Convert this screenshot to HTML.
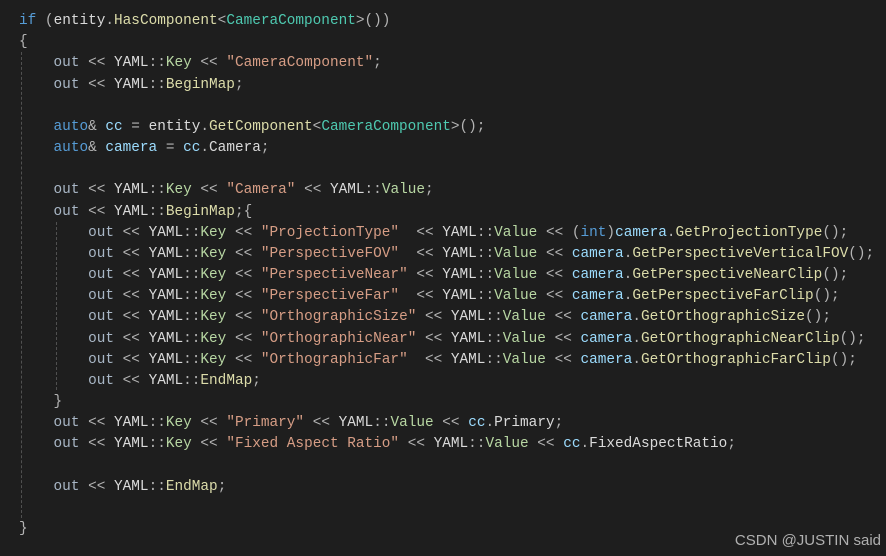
<!DOCTYPE html>
<html><head><meta charset="utf-8"><style>
html,body{margin:0;padding:0;background:#1e1e1e;width:886px;height:556px;overflow:hidden;position:relative}
pre{margin:0;position:absolute;left:19px;top:11px;font-family:"Liberation Mono",monospace;font-size:14.4px;line-height:21.17px;color:#dadada;white-space:pre}
.k{color:#569cd6}.t{color:#4ec9b0}.f{color:#dcdcaa}.s{color:#d69d85}.o{color:#b4b4b4}.v{color:#9cdcfe}.e{color:#b8d7a3}.l{color:#a9b7c6}
.g{position:absolute;width:0;border-left:1px dashed #505050}
.wm{position:absolute;right:5px;top:532px;font-family:"Liberation Sans",sans-serif;font-size:15px;color:#b0b0b0}
</style></head><body>
<div class="g" style="left:21px;top:52px;height:466px"></div>
<div class="g" style="left:56px;top:222px;height:168px"></div>
<pre><span class="k">if</span> <span class="o">(</span>entity<span class="o">.</span><span class="f">HasComponent</span><span class="o">&lt;</span><span class="t">CameraComponent</span><span class="o">&gt;())</span>
<span class="o">{</span>
    <span class="l">out</span> <span class="o">&lt;&lt;</span> YAML<span class="o">::</span><span class="e">Key</span> <span class="o">&lt;&lt;</span> <span class="s">"CameraComponent"</span><span class="o">;</span>
    <span class="l">out</span> <span class="o">&lt;&lt;</span> YAML<span class="o">::</span><span class="f">BeginMap</span><span class="o">;</span>

    <span class="k">auto</span><span class="o">&amp;</span> <span class="v">cc</span> <span class="o">=</span> entity<span class="o">.</span><span class="f">GetComponent</span><span class="o">&lt;</span><span class="t">CameraComponent</span><span class="o">&gt;();</span>
    <span class="k">auto</span><span class="o">&amp;</span> <span class="v">camera</span> <span class="o">=</span> <span class="v">cc</span><span class="o">.</span>Camera<span class="o">;</span>

    <span class="l">out</span> <span class="o">&lt;&lt;</span> YAML<span class="o">::</span><span class="e">Key</span> <span class="o">&lt;&lt;</span> <span class="s">"Camera"</span> <span class="o">&lt;&lt;</span> YAML<span class="o">::</span><span class="e">Value</span><span class="o">;</span>
    <span class="l">out</span> <span class="o">&lt;&lt;</span> YAML<span class="o">::</span><span class="f">BeginMap</span><span class="o">;{</span>
        <span class="l">out</span> <span class="o">&lt;&lt;</span> YAML<span class="o">::</span><span class="e">Key</span> <span class="o">&lt;&lt;</span> <span class="s">"ProjectionType"</span>  <span class="o">&lt;&lt;</span> YAML<span class="o">::</span><span class="e">Value</span> <span class="o">&lt;&lt;</span> <span class="o">(</span><span class="k">int</span><span class="o">)</span><span class="v">camera</span><span class="o">.</span><span class="f">GetProjectionType</span><span class="o">();</span>
        <span class="l">out</span> <span class="o">&lt;&lt;</span> YAML<span class="o">::</span><span class="e">Key</span> <span class="o">&lt;&lt;</span> <span class="s">"PerspectiveFOV"</span>  <span class="o">&lt;&lt;</span> YAML<span class="o">::</span><span class="e">Value</span> <span class="o">&lt;&lt;</span> <span class="v">camera</span><span class="o">.</span><span class="f">GetPerspectiveVerticalFOV</span><span class="o">();</span>
        <span class="l">out</span> <span class="o">&lt;&lt;</span> YAML<span class="o">::</span><span class="e">Key</span> <span class="o">&lt;&lt;</span> <span class="s">"PerspectiveNear"</span> <span class="o">&lt;&lt;</span> YAML<span class="o">::</span><span class="e">Value</span> <span class="o">&lt;&lt;</span> <span class="v">camera</span><span class="o">.</span><span class="f">GetPerspectiveNearClip</span><span class="o">();</span>
        <span class="l">out</span> <span class="o">&lt;&lt;</span> YAML<span class="o">::</span><span class="e">Key</span> <span class="o">&lt;&lt;</span> <span class="s">"PerspectiveFar"</span>  <span class="o">&lt;&lt;</span> YAML<span class="o">::</span><span class="e">Value</span> <span class="o">&lt;&lt;</span> <span class="v">camera</span><span class="o">.</span><span class="f">GetPerspectiveFarClip</span><span class="o">();</span>
        <span class="l">out</span> <span class="o">&lt;&lt;</span> YAML<span class="o">::</span><span class="e">Key</span> <span class="o">&lt;&lt;</span> <span class="s">"OrthographicSize"</span> <span class="o">&lt;&lt;</span> YAML<span class="o">::</span><span class="e">Value</span> <span class="o">&lt;&lt;</span> <span class="v">camera</span><span class="o">.</span><span class="f">GetOrthographicSize</span><span class="o">();</span>
        <span class="l">out</span> <span class="o">&lt;&lt;</span> YAML<span class="o">::</span><span class="e">Key</span> <span class="o">&lt;&lt;</span> <span class="s">"OrthographicNear"</span> <span class="o">&lt;&lt;</span> YAML<span class="o">::</span><span class="e">Value</span> <span class="o">&lt;&lt;</span> <span class="v">camera</span><span class="o">.</span><span class="f">GetOrthographicNearClip</span><span class="o">();</span>
        <span class="l">out</span> <span class="o">&lt;&lt;</span> YAML<span class="o">::</span><span class="e">Key</span> <span class="o">&lt;&lt;</span> <span class="s">"OrthographicFar"</span>  <span class="o">&lt;&lt;</span> YAML<span class="o">::</span><span class="e">Value</span> <span class="o">&lt;&lt;</span> <span class="v">camera</span><span class="o">.</span><span class="f">GetOrthographicFarClip</span><span class="o">();</span>
        <span class="l">out</span> <span class="o">&lt;&lt;</span> YAML<span class="o">::</span><span class="f">EndMap</span><span class="o">;</span>
    <span class="o">}</span>
    <span class="l">out</span> <span class="o">&lt;&lt;</span> YAML<span class="o">::</span><span class="e">Key</span> <span class="o">&lt;&lt;</span> <span class="s">"Primary"</span> <span class="o">&lt;&lt;</span> YAML<span class="o">::</span><span class="e">Value</span> <span class="o">&lt;&lt;</span> <span class="v">cc</span><span class="o">.</span>Primary<span class="o">;</span>
    <span class="l">out</span> <span class="o">&lt;&lt;</span> YAML<span class="o">::</span><span class="e">Key</span> <span class="o">&lt;&lt;</span> <span class="s">"Fixed Aspect Ratio"</span> <span class="o">&lt;&lt;</span> YAML<span class="o">::</span><span class="e">Value</span> <span class="o">&lt;&lt;</span> <span class="v">cc</span><span class="o">.</span>FixedAspectRatio<span class="o">;</span>

    <span class="l">out</span> <span class="o">&lt;&lt;</span> YAML<span class="o">::</span><span class="f">EndMap</span><span class="o">;</span>

<span class="o">}</span></pre>
<div class="wm">CSDN @JUSTIN said</div>
</body></html>
